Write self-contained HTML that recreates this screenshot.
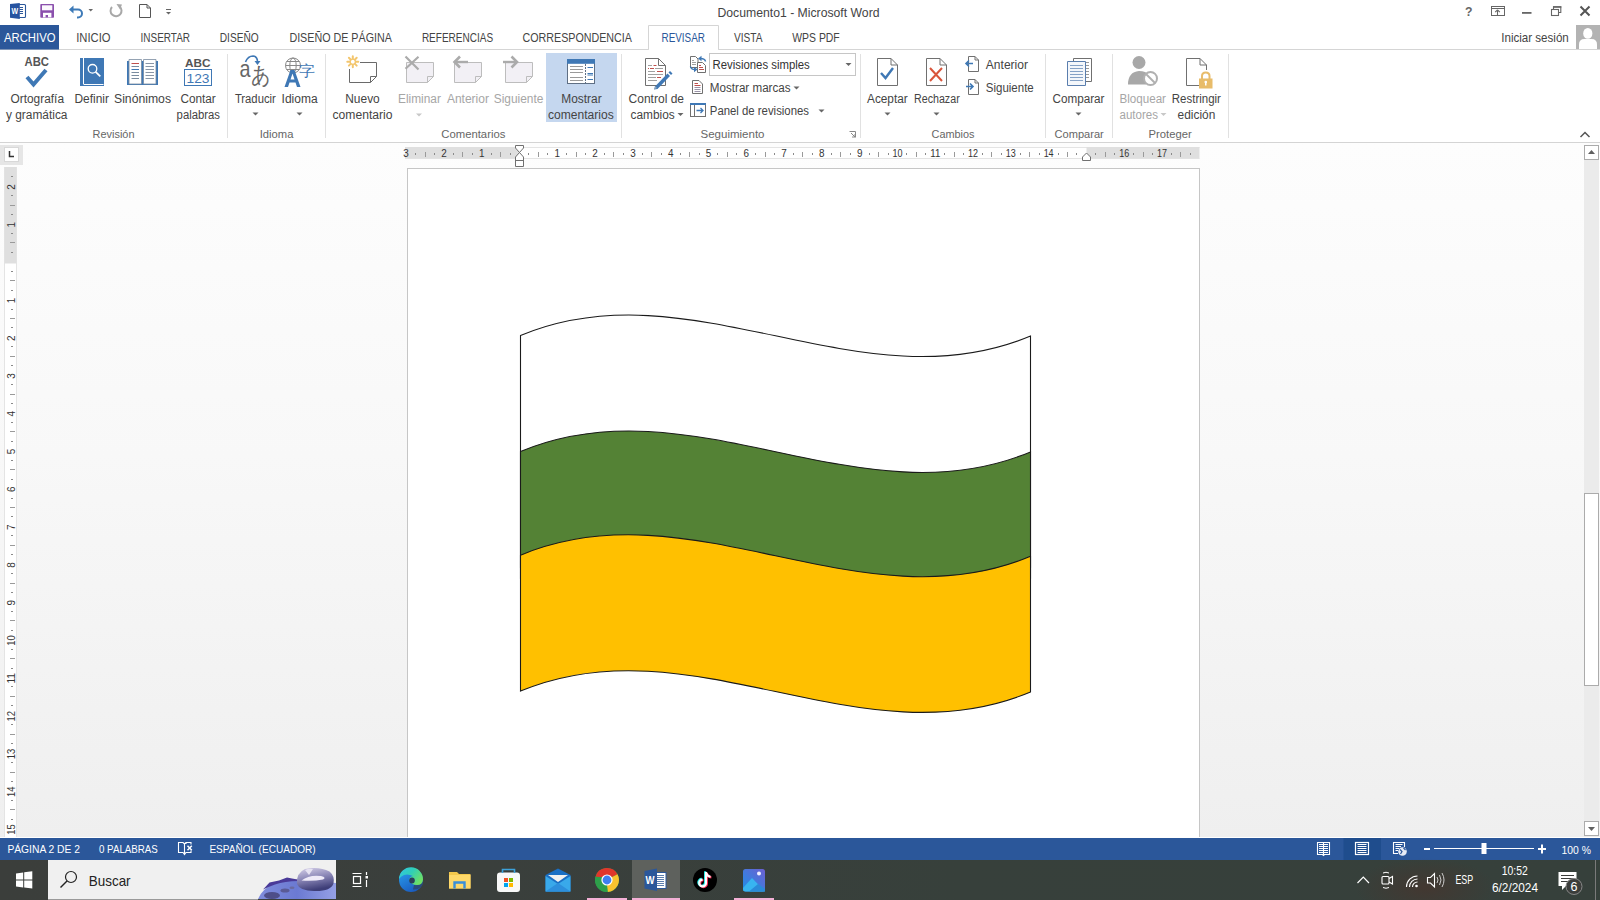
<!DOCTYPE html>
<html><head><meta charset="utf-8"><title>Documento1 - Microsoft Word</title>
<style>
html,body{margin:0;padding:0;width:1600px;height:900px;overflow:hidden;background:#fff;}
svg{display:block;font-family:"Liberation Sans", sans-serif;}
</style></head><body>
<svg width="1600" height="900" viewBox="0 0 1600 900">
<defs><linearGradient id="docbg" x1="0" y1="0" x2="0" y2="1"><stop offset="0" stop-color="#fdfdfd"/><stop offset="0.45" stop-color="#f8f8f8"/><stop offset="1" stop-color="#efefef"/></linearGradient><linearGradient id="tbbg" x1="0" y1="0" x2="1" y2="0"><stop offset="0" stop-color="#3b3e3b"/><stop offset="0.3" stop-color="#3a3f3c"/><stop offset="0.6" stop-color="#37403b"/><stop offset="1" stop-color="#36403b"/></linearGradient><radialGradient id="tbwarm" cx="0.5" cy="0.5" r="0.5"><stop offset="0" stop-color="#45362f" stop-opacity="0.85"/><stop offset="1" stop-color="#45362f" stop-opacity="0"/></radialGradient></defs>
<rect x="0" y="0" width="1600" height="143" fill="#ffffff" stroke="none" stroke-width="1" />
<rect x="0" y="143" width="1600" height="695" fill="url(#docbg)" stroke="none" stroke-width="1" />
<g><rect x="16.5" y="4.5" width="9" height="13" rx="1" fill="#fff" stroke="#2b579a" stroke-width="1.1"/><path d="M19.5 7.5 H23 M19.5 9.5 H23 M19.5 11.5 H23 M19.5 13.5 H23" stroke="#2b579a" stroke-width="1.1"/><path d="M10 4 L19.8 3 V19 L10 17.8 Z" fill="#2653a0"/><text x="11.6" y="14.2" font-size="8.5" font-weight="bold" fill="#fff" textLength="6.6" lengthAdjust="spacingAndGlyphs">W</text></g>
<g><rect x="40.3" y="4" width="13.7" height="13.8" rx="0.8" fill="#8b50ad"/><rect x="42" y="5.3" width="10.3" height="5" fill="#fbf8fd"/><rect x="43" y="12.8" width="8.4" height="4.6" fill="#fff"/><rect x="45.6" y="15" width="2.4" height="2.4" fill="#8b50ad"/></g>
<path d="M71.5 9.5 H78 a4 4 0 0 1 0 8 h-1" fill="none" stroke="#3d7ab8" stroke-width="2"/><path d="M69 9.5 L73.5 5.5 L73.5 13.5 Z" fill="#3d7ab8"/>
<path d="M88.5 9 L93 9 L90.75 11.5 Z" fill="#666"/>
<path d="M119.5 6.5 A5.5 5.5 0 1 1 112 7" fill="none" stroke="#a8a8a8" stroke-width="2"/><path d="M116.5 4 L122 4.5 L120 9.5 Z" fill="#a8a8a8"/>
<path d="M139.5 4.5 H147 L150.5 8 V17.5 H139.5 Z" fill="#fff" stroke="#555" stroke-width="1"/><path d="M147 4.5 V8 H150.5" fill="none" stroke="#555"/>
<line x1="166" y1="9.5" x2="171" y2="9.5" stroke="#666"/><path d="M166 12 H171 L168.5 14.5 Z" fill="#666"/>
<text x="717.50" y="17.00" font-size="13" fill="#444" font-weight="normal" textLength="162.00" lengthAdjust="spacingAndGlyphs" >Documento1 - Microsoft Word</text>
<text x="1465.00" y="16.00" font-size="13" fill="#666" font-weight="bold" textLength="7.50" lengthAdjust="spacingAndGlyphs" >?</text>
<rect x="1491.5" y="6.5" width="13" height="9" fill="none" stroke="#666"/><path d="M1497.5 9.8 L1495.2 12.2 M1497.5 9.8 L1499.8 12.2 M1497.5 10 V15" stroke="#666" fill="none" stroke-width="1.1"/><line x1="1491.5" y1="8.5" x2="1504.5" y2="8.5" stroke="#666"/>
<rect x="1522" y="12" width="9.5" height="1.8" fill="#666"/>
<rect x="1551.5" y="9.5" width="7" height="6" fill="none" stroke="#666" stroke-width="1.1"/><path d="M1553.5 9 V6.8 H1560.8 V12.5 H1558.5" fill="none" stroke="#666" stroke-width="1.1"/><rect x="1553" y="6.2" width="8.3" height="1.6" fill="#666"/>
<path d="M1580.5 6.5 L1589.5 15.5 M1589.5 6.5 L1580.5 15.5" stroke="#555" stroke-width="2"/>
<line x1="0" y1="49.5" x2="1600" y2="49.5" stroke="#d5d5d5" stroke-width="1" />
<rect x="0" y="25" width="59" height="24.5" fill="#2b579a" stroke="none" stroke-width="1" />
<text x="4.00" y="42.00" font-size="13" fill="#ffffff" font-weight="normal" textLength="51.50" lengthAdjust="spacingAndGlyphs" >ARCHIVO</text>
<path d="M648.5 49.5 V25.5 H718.5 V49.5" fill="#fff" stroke="#d5d5d5"/>
<rect x="649" y="49" width="69" height="1" fill="#ffffff" stroke="none" stroke-width="1" />
<text x="76.25" y="42.00" font-size="13" fill="#444" font-weight="normal" textLength="34.35" lengthAdjust="spacingAndGlyphs" >INICIO</text>
<text x="140.60" y="42.00" font-size="13" fill="#444" font-weight="normal" textLength="49.40" lengthAdjust="spacingAndGlyphs" >INSERTAR</text>
<text x="219.75" y="42.00" font-size="13" fill="#444" font-weight="normal" textLength="39.00" lengthAdjust="spacingAndGlyphs" >DISEÑO</text>
<text x="289.40" y="42.00" font-size="13" fill="#444" font-weight="normal" textLength="102.50" lengthAdjust="spacingAndGlyphs" >DISEÑO DE PÁGINA</text>
<text x="421.90" y="42.00" font-size="13" fill="#444" font-weight="normal" textLength="71.20" lengthAdjust="spacingAndGlyphs" >REFERENCIAS</text>
<text x="522.50" y="42.00" font-size="13" fill="#444" font-weight="normal" textLength="109.40" lengthAdjust="spacingAndGlyphs" >CORRESPONDENCIA</text>
<text x="734.00" y="42.00" font-size="13" fill="#444" font-weight="normal" textLength="28.50" lengthAdjust="spacingAndGlyphs" >VISTA</text>
<text x="792.25" y="42.00" font-size="13" fill="#444" font-weight="normal" textLength="47.50" lengthAdjust="spacingAndGlyphs" >WPS PDF</text>
<text x="661.50" y="42.00" font-size="13" fill="#2b579a" font-weight="normal" textLength="43.50" lengthAdjust="spacingAndGlyphs" >REVISAR</text>
<text x="1501.25" y="41.50" font-size="13" fill="#444" font-weight="normal" textLength="67.50" lengthAdjust="spacingAndGlyphs" >Iniciar sesión</text>
<rect x="1576" y="25" width="24" height="24" fill="#b3b3b3" stroke="none" stroke-width="1" />
<ellipse cx="1587.8" cy="33.4" rx="4.6" ry="5.4" fill="#fff"/><path d="M1579 49 V44.5 Q1579 39 1584.5 39 H1591.5 Q1597 39 1597 44.5 V49 Z" fill="#fff"/>
<line x1="0" y1="142.5" x2="1600" y2="142.5" stroke="#d4d4d4" stroke-width="1" />
<line x1="227.5" y1="54" x2="227.5" y2="138" stroke="#e1e1e1" stroke-width="1" />
<line x1="325.5" y1="54" x2="325.5" y2="138" stroke="#e1e1e1" stroke-width="1" />
<line x1="621.5" y1="54" x2="621.5" y2="138" stroke="#e1e1e1" stroke-width="1" />
<line x1="860.5" y1="54" x2="860.5" y2="138" stroke="#e1e1e1" stroke-width="1" />
<line x1="1045.5" y1="54" x2="1045.5" y2="138" stroke="#e1e1e1" stroke-width="1" />
<line x1="1112.5" y1="54" x2="1112.5" y2="138" stroke="#e1e1e1" stroke-width="1" />
<line x1="1228.5" y1="54" x2="1228.5" y2="138" stroke="#e1e1e1" stroke-width="1" />
<text x="10.50" y="103.00" font-size="12" fill="#444" font-weight="normal" textLength="53.50" lengthAdjust="spacingAndGlyphs" >Ortografía</text>
<text x="6.00" y="119.00" font-size="12" fill="#444" font-weight="normal" textLength="61.50" lengthAdjust="spacingAndGlyphs" >y gramática</text>
<text x="74.50" y="103.00" font-size="12" fill="#444" font-weight="normal" textLength="34.50" lengthAdjust="spacingAndGlyphs" >Definir</text>
<text x="114.00" y="103.00" font-size="12" fill="#444" font-weight="normal" textLength="57.00" lengthAdjust="spacingAndGlyphs" >Sinónimos</text>
<text x="180.40" y="103.00" font-size="12" fill="#444" font-weight="normal" textLength="35.40" lengthAdjust="spacingAndGlyphs" >Contar</text>
<text x="176.60" y="119.00" font-size="12" fill="#444" font-weight="normal" textLength="43.40" lengthAdjust="spacingAndGlyphs" >palabras</text>
<text x="234.90" y="103.00" font-size="12" fill="#444" font-weight="normal" textLength="40.90" lengthAdjust="spacingAndGlyphs" >Traducir</text>
<text x="281.60" y="103.00" font-size="12" fill="#444" font-weight="normal" textLength="36.00" lengthAdjust="spacingAndGlyphs" >Idioma</text>
<text x="345.25" y="103.00" font-size="12" fill="#444" font-weight="normal" textLength="34.50" lengthAdjust="spacingAndGlyphs" >Nuevo</text>
<text x="332.50" y="119.00" font-size="12" fill="#444" font-weight="normal" textLength="60.00" lengthAdjust="spacingAndGlyphs" >comentario</text>
<text x="398.00" y="103.00" font-size="12" fill="#a6a6a6" font-weight="normal" textLength="42.90" lengthAdjust="spacingAndGlyphs" >Eliminar</text>
<text x="446.90" y="103.00" font-size="12" fill="#a6a6a6" font-weight="normal" textLength="42.10" lengthAdjust="spacingAndGlyphs" >Anterior</text>
<text x="493.75" y="103.00" font-size="12" fill="#a6a6a6" font-weight="normal" textLength="49.65" lengthAdjust="spacingAndGlyphs" >Siguiente</text>
<rect x="546" y="53" width="71" height="69" fill="#c5d7ef" stroke="none" stroke-width="1" />
<text x="561.25" y="103.00" font-size="12" fill="#444" font-weight="normal" textLength="40.35" lengthAdjust="spacingAndGlyphs" >Mostrar</text>
<text x="548.00" y="119.00" font-size="12" fill="#444" font-weight="normal" textLength="65.75" lengthAdjust="spacingAndGlyphs" >comentarios</text>
<text x="628.60" y="103.00" font-size="12" fill="#444" font-weight="normal" textLength="55.40" lengthAdjust="spacingAndGlyphs" >Control de</text>
<text x="630.60" y="119.00" font-size="12" fill="#444" font-weight="normal" textLength="44.10" lengthAdjust="spacingAndGlyphs" >cambios</text>
<text x="867.00" y="103.00" font-size="12" fill="#444" font-weight="normal" textLength="40.70" lengthAdjust="spacingAndGlyphs" >Aceptar</text>
<text x="914.00" y="103.00" font-size="12" fill="#444" font-weight="normal" textLength="45.70" lengthAdjust="spacingAndGlyphs" >Rechazar</text>
<text x="985.80" y="68.75" font-size="12" fill="#444" font-weight="normal" textLength="42.20" lengthAdjust="spacingAndGlyphs" >Anterior</text>
<text x="985.80" y="91.90" font-size="12" fill="#444" font-weight="normal" textLength="47.95" lengthAdjust="spacingAndGlyphs" >Siguiente</text>
<text x="1052.50" y="103.00" font-size="12" fill="#444" font-weight="normal" textLength="52.00" lengthAdjust="spacingAndGlyphs" >Comparar</text>
<text x="1119.50" y="103.00" font-size="12" fill="#a6a6a6" font-weight="normal" textLength="46.50" lengthAdjust="spacingAndGlyphs" >Bloquear</text>
<text x="1119.50" y="119.00" font-size="12" fill="#a6a6a6" font-weight="normal" textLength="38.50" lengthAdjust="spacingAndGlyphs" >autores</text>
<text x="1171.80" y="103.00" font-size="12" fill="#444" font-weight="normal" textLength="49.10" lengthAdjust="spacingAndGlyphs" >Restringir</text>
<text x="1177.60" y="119.00" font-size="12" fill="#444" font-weight="normal" textLength="37.70" lengthAdjust="spacingAndGlyphs" >edición</text>
<rect x="709.5" y="53.5" width="146" height="22" fill="#fff" stroke="#c6c6c6"/>
<text x="712.50" y="69.00" font-size="12" fill="#333" font-weight="normal" textLength="97.30" lengthAdjust="spacingAndGlyphs" >Revisiones simples</text>
<text x="709.80" y="92.20" font-size="12" fill="#444" font-weight="normal" textLength="80.80" lengthAdjust="spacingAndGlyphs" >Mostrar marcas</text>
<text x="709.80" y="114.70" font-size="12" fill="#444" font-weight="normal" textLength="99.20" lengthAdjust="spacingAndGlyphs" >Panel de revisiones</text>
<text x="92.60" y="137.50" font-size="11" fill="#666" font-weight="normal" textLength="41.90" lengthAdjust="spacingAndGlyphs" >Revisión</text>
<text x="259.70" y="137.50" font-size="11" fill="#666" font-weight="normal" textLength="33.70" lengthAdjust="spacingAndGlyphs" >Idioma</text>
<text x="441.25" y="137.50" font-size="11" fill="#666" font-weight="normal" textLength="64.15" lengthAdjust="spacingAndGlyphs" >Comentarios</text>
<text x="700.50" y="137.50" font-size="11" fill="#666" font-weight="normal" textLength="64.00" lengthAdjust="spacingAndGlyphs" >Seguimiento</text>
<text x="931.60" y="137.50" font-size="11" fill="#666" font-weight="normal" textLength="42.90" lengthAdjust="spacingAndGlyphs" >Cambios</text>
<text x="1054.50" y="137.50" font-size="11" fill="#666" font-weight="normal" textLength="49.25" lengthAdjust="spacingAndGlyphs" >Comparar</text>
<text x="1148.60" y="137.50" font-size="11" fill="#666" font-weight="normal" textLength="43.20" lengthAdjust="spacingAndGlyphs" >Proteger</text>
<path d="M252.5 112.5 H258.5 L255.5 115.5 Z" fill="#666"/>
<path d="M296.5 112.5 H302.5 L299.5 115.5 Z" fill="#666"/>
<path d="M416 113.5 H422 L419 116.5 Z" fill="#c8c8c8"/>
<path d="M677.5 113.0 H683.5 L680.5 116.0 Z" fill="#666"/>
<path d="M884.5 112.5 H890.5 L887.5 115.5 Z" fill="#666"/>
<path d="M933.5 112.5 H939.5 L936.5 115.5 Z" fill="#666"/>
<path d="M1075.5 112.5 H1081.5 L1078.5 115.5 Z" fill="#666"/>
<path d="M1160.5 113.0 H1166.5 L1163.5 116.0 Z" fill="#c8c8c8"/>
<path d="M845.5 63.0 H851.5 L848.5 66.0 Z" fill="#666"/>
<path d="M793.5 86.5 H799.5 L796.5 89.5 Z" fill="#666"/>
<path d="M818.5 109.5 H824.5 L821.5 112.5 Z" fill="#666"/>
<path d="M849.5 131.5 H855.5 V137.5" fill="none" stroke="#888"/><path d="M851 133 L855 137 M852 137 H855 V134" fill="none" stroke="#888"/>
<path d="M1580.5 137 L1585 132.5 L1589.5 137" fill="none" stroke="#555" stroke-width="1.5"/>
<text x="24.5" y="66" font-size="12" font-weight="bold" fill="#555" textLength="24.5" lengthAdjust="spacingAndGlyphs">ABC</text>
<path d="M27 77 L33.5 84.5 L46 70" fill="none" stroke="#3f78b5" stroke-width="4"/>
<rect x="80" y="58" width="24" height="26" fill="#3f78b5"/><rect x="83" y="58" width="1" height="26" fill="#fff"/><rect x="80" y="84" width="24" height="2" fill="#3f78b5"/><rect x="83.5" y="84" width="20" height="1" fill="#fff"/><circle cx="92.5" cy="68.8" r="4.3" fill="none" stroke="#fff" stroke-width="1.3"/><path d="M95.6 71.9 L100.3 76.3" stroke="#fff" stroke-width="1.8"/>
<path d="M127 61 H158 V85 H127 Z" fill="#3f78b5"/><path d="M129 59.5 H141.5 V84 H129 Z" fill="#fff" stroke="#7a8ca0" stroke-width="0.8"/><path d="M143.5 59.5 H156 V84 H143.5 Z" fill="#fff" stroke="#7a8ca0" stroke-width="0.8"/>
<line x1="131.5" y1="63.5" x2="139" y2="63.5" stroke="#c0504d" stroke-width="1"/><line x1="145.5" y1="63.5" x2="154" y2="63.5" stroke="#8a96a6" stroke-width="1"/>
<line x1="131.5" y1="66.5" x2="139" y2="66.5" stroke="#7a8ca0" stroke-width="1"/><line x1="145.5" y1="66.5" x2="154" y2="66.5" stroke="#8a96a6" stroke-width="1"/>
<line x1="131.5" y1="69.5" x2="139" y2="69.5" stroke="#3f78b5" stroke-width="1"/><line x1="145.5" y1="69.5" x2="154" y2="69.5" stroke="#8a96a6" stroke-width="1"/>
<line x1="131.5" y1="72.5" x2="139" y2="72.5" stroke="#7a8ca0" stroke-width="1"/><line x1="145.5" y1="72.5" x2="154" y2="72.5" stroke="#8a96a6" stroke-width="1"/>
<line x1="131.5" y1="75.5" x2="139" y2="75.5" stroke="#7a8ca0" stroke-width="1"/><line x1="145.5" y1="75.5" x2="154" y2="75.5" stroke="#8a96a6" stroke-width="1"/>
<line x1="131.5" y1="78.5" x2="139" y2="78.5" stroke="#7a8ca0" stroke-width="1"/><line x1="145.5" y1="78.5" x2="154" y2="78.5" stroke="#8a96a6" stroke-width="1"/>
<text x="185" y="66.5" font-size="11" font-weight="bold" fill="#555" textLength="25.5" lengthAdjust="spacingAndGlyphs">ABC</text><rect x="184.5" y="69.5" width="27" height="16" fill="#fff" stroke="#3f78b5"/><text x="186.5" y="83" font-size="13" fill="#3f78b5" textLength="23" lengthAdjust="spacingAndGlyphs">123</text>
<text x="239.5" y="76.5" font-size="24" fill="#666" textLength="11" lengthAdjust="spacingAndGlyphs">a</text><text x="250.5" y="83" font-size="23" fill="#666" textLength="20" lengthAdjust="spacingAndGlyphs">あ</text><path d="M245.5 62 Q248 56 253 56 Q257.5 56.5 257.5 62" fill="none" stroke="#3f78b5" stroke-width="1.6"/><path d="M254.5 61 L257.5 65 L260.5 61 Z" fill="#3f78b5"/>
<circle cx="293" cy="65.5" r="7.5" fill="none" stroke="#888" stroke-width="1"/><ellipse cx="293" cy="65.5" rx="3.2" ry="7.5" fill="none" stroke="#888" stroke-width="1"/><line x1="285.5" y1="65.5" x2="300.5" y2="65.5" stroke="#888"/><line x1="286.5" y1="61.5" x2="299.5" y2="61.5" stroke="#888"/><line x1="286.5" y1="69.5" x2="299.5" y2="69.5" stroke="#888"/><path d="M284.5 87 L290.5 70 H294.5 L300.5 87 H297 L295.5 82.5 H289.5 L288 87 Z M290.5 79.5 H294.5 L292.5 73.5 Z" fill="#3f78b5" fill-rule="evenodd"/><text x="299" y="76" font-size="15" fill="#3f78b5" textLength="16" lengthAdjust="spacingAndGlyphs">字</text>
<path d="M360 62.5 H376.5 V76.5 L370.5 82.5 H349.5 V69" fill="#fff" stroke="#6a6a6a"/><path d="M376.5 76.5 H370.5 V82.5" fill="none" stroke="#6a6a6a"/>
<g stroke="#f3c66e" stroke-width="2" stroke-linecap="round"><path d="M352.8 56.2 V58.6 M352.8 64.8 V67.2 M347.3 61.7 H349.7 M355.9 61.7 H358.3 M348.9 57.8 L350.6 59.5 M355 63.9 L356.7 65.6 M356.7 57.8 L355 59.5 M350.6 63.9 L348.9 65.6"/></g><circle cx="352.8" cy="61.7" r="2.6" fill="none" stroke="#f3c66e" stroke-width="1.3"/>
<path d="M406.5 62.5 H433.5 V76.5 L427.5 82.5 H406.5 Z" fill="#f2f0f5" stroke="#bdbdbd"/><path d="M433.5 76.5 H427.5 V82.5" fill="none" stroke="#bdbdbd"/>
<path d="M405.5 56.5 L418.5 69.5 M418.5 56.8 L405.5 68.8" stroke="#ababab" stroke-width="2.2"/>
<path d="M454.5 62.5 H481.5 V76.5 L475.5 82.5 H454.5 Z" fill="#f2f0f5" stroke="#bdbdbd"/><path d="M481.5 76.5 H475.5 V82.5" fill="none" stroke="#bdbdbd"/>
<path d="M454 62 H468" stroke="#ababab" stroke-width="2.4"/><path d="M460 56.5 L454.5 62 L460 67.5" fill="none" stroke="#ababab" stroke-width="2.6"/>
<path d="M505.5 62.5 H532.5 V76.5 L526.5 82.5 H505.5 Z" fill="#f2f0f5" stroke="#bdbdbd"/><path d="M532.5 76.5 H526.5 V82.5" fill="none" stroke="#bdbdbd"/>
<path d="M503 62 H517" stroke="#ababab" stroke-width="2.4"/><path d="M511.5 56.5 L517 62 L511.5 67.5" fill="none" stroke="#ababab" stroke-width="2.6"/>
<rect x="567.5" y="59.5" width="27" height="24" fill="#fff" stroke="#5f6f84"/><rect x="567" y="59" width="28" height="4.8" fill="#3f78b5"/><line x1="585.5" y1="64" x2="585.5" y2="83" stroke="#5f6f84" stroke-dasharray="2 1"/>
<line x1="570" y1="66.5" x2="583" y2="66.5" stroke="#9a9a9a"/>
<line x1="570" y1="69.5" x2="583" y2="69.5" stroke="#9a9a9a"/>
<line x1="570" y1="72.5" x2="583" y2="72.5" stroke="#9a9a9a"/>
<line x1="570" y1="77.5" x2="583" y2="77.5" stroke="#9a9a9a"/>
<line x1="570" y1="80.5" x2="583" y2="80.5" stroke="#9a9a9a"/>
<line x1="587.5" y1="67.5" x2="593" y2="67.5" stroke="#3f78b5"/>
<line x1="587.5" y1="73.5" x2="593" y2="73.5" stroke="#3f78b5"/>
<line x1="587.5" y1="75" x2="593" y2="75" stroke="#3f78b5"/>
<line x1="587.5" y1="79.5" x2="593" y2="79.5" stroke="#3f78b5"/>
<path d="M645.5 58.5 H658.5 L665.5 65.5 V85.5 H645.5 Z" fill="#fff" stroke="#707070"/><path d="M658.5 58.5 V65.5 H665.5" fill="none" stroke="#707070"/>
<line x1="648" y1="65.5" x2="652" y2="65.5" stroke="#a0a0a0"/>
<line x1="653.5" y1="65.5" x2="656.5" y2="65.5" stroke="#c0504d"/>
<line x1="648" y1="68.5" x2="649" y2="68.5" stroke="#c0504d"/>
<line x1="650" y1="68.5" x2="654" y2="68.5" stroke="#c0504d"/>
<line x1="655" y1="68.5" x2="663" y2="68.5" stroke="#a0a0a0"/>
<line x1="648" y1="71.5" x2="655" y2="71.5" stroke="#a0a0a0"/>
<line x1="657" y1="71.5" x2="663" y2="71.5" stroke="#c0504d"/>
<line x1="648" y1="74.5" x2="663" y2="74.5" stroke="#a0a0a0"/>
<line x1="648" y1="77.5" x2="656" y2="77.5" stroke="#a0a0a0"/>
<line x1="657" y1="77.5" x2="661" y2="77.5" stroke="#c0504d"/>
<line x1="648" y1="80.5" x2="657" y2="80.5" stroke="#a0a0a0"/>
<path d="M655 86.5 L667.5 73.5 L670 76 L657.5 89 L654 89.5 Z" fill="#3f78b5"/><path d="M668.5 72.5 L670 71 L672.5 73.5 L671 75 Z" fill="#3f78b5"/><path d="M657 88 L655.5 86.5 L654 89.5 Z" fill="#9ab"/>
<path d="M690.5 56.5 H695.5 L698 59 V67.5 H690.5 Z" fill="#fff" stroke="#707070"/><path d="M692 60.5 H694 M692 62.5 H696 M692 64.5 H696" stroke="#a0a0a0"/><path d="M697.5 62.5 H702.5 L705.5 65.5 V72.5 H697.5 Z" fill="#fff" stroke="#707070"/><path d="M699 65.5 H701 M699 67.5 H703 M699 69.5 H704" stroke="#c0504d"/><path d="M705.5 61.5 Q705 58.5 700.5 58.5" fill="none" stroke="#3f78b5" stroke-width="1.5"/><path d="M698 58.5 L701.5 55.8 V61.2 Z" fill="#3f78b5"/><path d="M690.5 66.5 Q691 69.5 695 69.5" fill="none" stroke="#3f78b5" stroke-width="1.5"/><path d="M697.5 69.5 L694 66.8 V72.2 Z" fill="#3f78b5"/>
<path d="M692.5 80.5 H699 L702.5 84 V93.5 H692.5 Z" fill="#fff" stroke="#707070"/><path d="M694.5 83.5 H698 M694.5 85.5 H700.5" stroke="#c0504d"/><path d="M694.5 87.5 H700.5 M694.5 89.5 H700.5 M694.5 91.5 H700.5" stroke="#9a93a8"/>
<rect x="690.5" y="103.5" width="15" height="13" fill="#fff" stroke="#707070"/><rect x="690" y="103" width="16" height="2" fill="#3f78b5"/><path d="M694.5 105 V116.5" stroke="#707070"/><path d="M696.5 110.5 H703 M700.5 108 L703 110.5 L700.5 113" fill="none" stroke="#3f78b5" stroke-width="1.3"/>
<path d="M877.5 58.5 H891 L897.5 65 V85.5 H877.5 Z" fill="#fff" stroke="#707070"/><path d="M891 58.5 V65 H897.5" fill="none" stroke="#707070"/>
<path d="M881 73 L885.5 78 L893 68" fill="none" stroke="#3f78b5" stroke-width="2.4"/>
<path d="M926.5 58.5 H940 L946.5 65 V85.5 H926.5 Z" fill="#fff" stroke="#707070"/><path d="M940 58.5 V65 H946.5" fill="none" stroke="#707070"/>
<path d="M930 68 L942 81 M942 68 L930 81" stroke="#d9553b" stroke-width="2"/>
<path d="M968.5 56.5 H975 L978.5 60 V71.5 H968.5 Z" fill="#fff" stroke="#707070"/><path d="M975 56.5 V60 H978.5" fill="none" stroke="#707070"/>
<path d="M966 63.5 H973 M969 60.5 L966 63.5 L969 66.5" fill="none" stroke="#3f78b5" stroke-width="1.6"/>
<path d="M968.5 79.5 H975 L978.5 83 V94.5 H968.5 Z" fill="#fff" stroke="#707070"/><path d="M975 79.5 V83 H978.5" fill="none" stroke="#707070"/>
<path d="M966 86.5 H973 M970 83.5 L973 86.5 L970 89.5" fill="none" stroke="#3f78b5" stroke-width="1.6"/>
<path d="M1073.5 58.5 H1091.5 V81.5 H1073.5 Z" fill="#fff" stroke="#707070"/><path d="M1067.5 61.5 H1085.5 V85.5 H1067.5 Z" fill="#f4f7fb" stroke="#5a7eae"/>
<line x1="1070" y1="65.5" x2="1083" y2="65.5" stroke="#86a2c6"/>
<line x1="1070" y1="68.5" x2="1083" y2="68.5" stroke="#86a2c6"/>
<line x1="1070" y1="71.5" x2="1083" y2="71.5" stroke="#86a2c6"/>
<line x1="1070" y1="74.5" x2="1083" y2="74.5" stroke="#86a2c6"/>
<line x1="1070" y1="77.5" x2="1083" y2="77.5" stroke="#86a2c6"/>
<line x1="1070" y1="80.5" x2="1083" y2="80.5" stroke="#86a2c6"/>
<line x1="1086" y1="62.5" x2="1089" y2="62.5" stroke="#999"/>
<line x1="1086" y1="65.5" x2="1089" y2="65.5" stroke="#999"/>
<line x1="1086" y1="68.5" x2="1089" y2="68.5" stroke="#999"/>
<line x1="1086" y1="71.5" x2="1089" y2="71.5" stroke="#999"/>
<line x1="1086" y1="74.5" x2="1089" y2="74.5" stroke="#999"/>
<line x1="1086" y1="77.5" x2="1089" y2="77.5" stroke="#999"/>
<circle cx="1139" cy="62.5" r="6.5" fill="#a8a8a8"/><path d="M1128 84.5 Q1128 72 1139 71 Q1146 71 1149 75 L1146 84.5 Z" fill="#a8a8a8"/><circle cx="1150.5" cy="78.5" r="6.5" fill="#fff" stroke="#b0b0b0" stroke-width="2"/><path d="M1146 74 L1155 83" stroke="#b0b0b0" stroke-width="2"/>
<path d="M1186.5 58.5 H1200 L1206.5 65 V70 M1199 85.5 H1186.5 V58.5" fill="none" stroke="#707070"/><path d="M1200 58.5 V65 H1206.5" fill="none" stroke="#707070"/><path d="M1202 79 V76 Q1202 72.5 1205.75 72.5 Q1209.5 72.5 1209.5 76 V79" fill="none" stroke="#e8bc6a" stroke-width="2"/><rect x="1199" y="78.5" width="13.5" height="10" fill="#e8bc6a"/><circle cx="1205.75" cy="82" r="1.3" fill="#fff"/><rect x="1205" y="82" width="1.5" height="3.5" fill="#fff"/>
<rect x="0" y="145" width="23" height="20" fill="#e6e6e6" stroke="none" stroke-width="1" />
<rect x="4.5" y="147.5" width="14" height="14" fill="#fff" stroke="#d8d8d8" stroke-width="1" />
<path d="M9.5 151 V156.5 H14" fill="none" stroke="#333" stroke-width="1.5"/>
<rect x="405" y="147" width="794.5" height="11.5" fill="#ffffff" stroke="none" stroke-width="1" />
<line x1="405" y1="147.5" x2="1199.5" y2="147.5" stroke="#e4e4e4" stroke-width="1" />
<line x1="405" y1="158.5" x2="1199.5" y2="158.5" stroke="#e4e4e4" stroke-width="1" />
<rect x="405" y="147" width="114.5" height="11.5" fill="#dfdfdf" stroke="none" stroke-width="1" />
<rect x="1086.5" y="147" width="113" height="11.5" fill="#dfdfdf" stroke="none" stroke-width="1" />
<text x="403.37" y="157.00" font-size="10" fill="#333" font-weight="normal" textLength="5.50" lengthAdjust="spacingAndGlyphs" >3</text>
<rect x="415" y="153" width="1" height="2" fill="#8a8a8a" stroke="none" stroke-width="1" />
<rect x="425" y="152" width="1" height="5" fill="#9a9a9a" stroke="none" stroke-width="1" />
<rect x="434" y="153" width="1" height="2" fill="#8a8a8a" stroke="none" stroke-width="1" />
<text x="441.16" y="157.00" font-size="10" fill="#333" font-weight="normal" textLength="5.50" lengthAdjust="spacingAndGlyphs" >2</text>
<rect x="453" y="153" width="1" height="2" fill="#8a8a8a" stroke="none" stroke-width="1" />
<rect x="462" y="152" width="1" height="5" fill="#9a9a9a" stroke="none" stroke-width="1" />
<rect x="472" y="153" width="1" height="2" fill="#8a8a8a" stroke="none" stroke-width="1" />
<text x="478.95" y="157.00" font-size="10" fill="#333" font-weight="normal" textLength="5.50" lengthAdjust="spacingAndGlyphs" >1</text>
<rect x="491" y="153" width="1" height="2" fill="#8a8a8a" stroke="none" stroke-width="1" />
<rect x="500" y="152" width="1" height="5" fill="#9a9a9a" stroke="none" stroke-width="1" />
<rect x="510" y="153" width="1" height="2" fill="#8a8a8a" stroke="none" stroke-width="1" />
<rect x="528" y="153" width="1" height="2" fill="#8a8a8a" stroke="none" stroke-width="1" />
<rect x="538" y="152" width="1" height="5" fill="#9a9a9a" stroke="none" stroke-width="1" />
<rect x="547" y="153" width="1" height="2" fill="#8a8a8a" stroke="none" stroke-width="1" />
<text x="554.54" y="157.00" font-size="10" fill="#333" font-weight="normal" textLength="5.50" lengthAdjust="spacingAndGlyphs" >1</text>
<rect x="566" y="153" width="1" height="2" fill="#8a8a8a" stroke="none" stroke-width="1" />
<rect x="576" y="152" width="1" height="5" fill="#9a9a9a" stroke="none" stroke-width="1" />
<rect x="585" y="153" width="1" height="2" fill="#8a8a8a" stroke="none" stroke-width="1" />
<text x="592.34" y="157.00" font-size="10" fill="#333" font-weight="normal" textLength="5.50" lengthAdjust="spacingAndGlyphs" >2</text>
<rect x="604" y="153" width="1" height="2" fill="#8a8a8a" stroke="none" stroke-width="1" />
<rect x="613" y="152" width="1" height="5" fill="#9a9a9a" stroke="none" stroke-width="1" />
<rect x="623" y="153" width="1" height="2" fill="#8a8a8a" stroke="none" stroke-width="1" />
<text x="630.13" y="157.00" font-size="10" fill="#333" font-weight="normal" textLength="5.50" lengthAdjust="spacingAndGlyphs" >3</text>
<rect x="642" y="153" width="1" height="2" fill="#8a8a8a" stroke="none" stroke-width="1" />
<rect x="651" y="152" width="1" height="5" fill="#9a9a9a" stroke="none" stroke-width="1" />
<rect x="661" y="153" width="1" height="2" fill="#8a8a8a" stroke="none" stroke-width="1" />
<text x="667.93" y="157.00" font-size="10" fill="#333" font-weight="normal" textLength="5.50" lengthAdjust="spacingAndGlyphs" >4</text>
<rect x="680" y="153" width="1" height="2" fill="#8a8a8a" stroke="none" stroke-width="1" />
<rect x="689" y="152" width="1" height="5" fill="#9a9a9a" stroke="none" stroke-width="1" />
<rect x="699" y="153" width="1" height="2" fill="#8a8a8a" stroke="none" stroke-width="1" />
<text x="705.73" y="157.00" font-size="10" fill="#333" font-weight="normal" textLength="5.50" lengthAdjust="spacingAndGlyphs" >5</text>
<rect x="717" y="153" width="1" height="2" fill="#8a8a8a" stroke="none" stroke-width="1" />
<rect x="727" y="152" width="1" height="5" fill="#9a9a9a" stroke="none" stroke-width="1" />
<rect x="736" y="153" width="1" height="2" fill="#8a8a8a" stroke="none" stroke-width="1" />
<text x="743.52" y="157.00" font-size="10" fill="#333" font-weight="normal" textLength="5.50" lengthAdjust="spacingAndGlyphs" >6</text>
<rect x="755" y="153" width="1" height="2" fill="#8a8a8a" stroke="none" stroke-width="1" />
<rect x="765" y="152" width="1" height="5" fill="#9a9a9a" stroke="none" stroke-width="1" />
<rect x="774" y="153" width="1" height="2" fill="#8a8a8a" stroke="none" stroke-width="1" />
<text x="781.32" y="157.00" font-size="10" fill="#333" font-weight="normal" textLength="5.50" lengthAdjust="spacingAndGlyphs" >7</text>
<rect x="793" y="153" width="1" height="2" fill="#8a8a8a" stroke="none" stroke-width="1" />
<rect x="802" y="152" width="1" height="5" fill="#9a9a9a" stroke="none" stroke-width="1" />
<rect x="812" y="153" width="1" height="2" fill="#8a8a8a" stroke="none" stroke-width="1" />
<text x="819.11" y="157.00" font-size="10" fill="#333" font-weight="normal" textLength="5.50" lengthAdjust="spacingAndGlyphs" >8</text>
<rect x="831" y="153" width="1" height="2" fill="#8a8a8a" stroke="none" stroke-width="1" />
<rect x="840" y="152" width="1" height="5" fill="#9a9a9a" stroke="none" stroke-width="1" />
<rect x="850" y="153" width="1" height="2" fill="#8a8a8a" stroke="none" stroke-width="1" />
<text x="856.90" y="157.00" font-size="10" fill="#333" font-weight="normal" textLength="5.50" lengthAdjust="spacingAndGlyphs" >9</text>
<rect x="869" y="153" width="1" height="2" fill="#8a8a8a" stroke="none" stroke-width="1" />
<rect x="878" y="152" width="1" height="5" fill="#9a9a9a" stroke="none" stroke-width="1" />
<rect x="888" y="153" width="1" height="2" fill="#8a8a8a" stroke="none" stroke-width="1" />
<text x="892.45" y="157.00" font-size="10" fill="#333" font-weight="normal" textLength="10.00" lengthAdjust="spacingAndGlyphs" >10</text>
<rect x="906" y="153" width="1" height="2" fill="#8a8a8a" stroke="none" stroke-width="1" />
<rect x="916" y="152" width="1" height="5" fill="#9a9a9a" stroke="none" stroke-width="1" />
<rect x="925" y="153" width="1" height="2" fill="#8a8a8a" stroke="none" stroke-width="1" />
<text x="930.25" y="157.00" font-size="10" fill="#333" font-weight="normal" textLength="10.00" lengthAdjust="spacingAndGlyphs" >11</text>
<rect x="944" y="153" width="1" height="2" fill="#8a8a8a" stroke="none" stroke-width="1" />
<rect x="954" y="152" width="1" height="5" fill="#9a9a9a" stroke="none" stroke-width="1" />
<rect x="963" y="153" width="1" height="2" fill="#8a8a8a" stroke="none" stroke-width="1" />
<text x="968.04" y="157.00" font-size="10" fill="#333" font-weight="normal" textLength="10.00" lengthAdjust="spacingAndGlyphs" >12</text>
<rect x="982" y="153" width="1" height="2" fill="#8a8a8a" stroke="none" stroke-width="1" />
<rect x="991" y="152" width="1" height="5" fill="#9a9a9a" stroke="none" stroke-width="1" />
<rect x="1001" y="153" width="1" height="2" fill="#8a8a8a" stroke="none" stroke-width="1" />
<text x="1005.84" y="157.00" font-size="10" fill="#333" font-weight="normal" textLength="10.00" lengthAdjust="spacingAndGlyphs" >13</text>
<rect x="1020" y="153" width="1" height="2" fill="#8a8a8a" stroke="none" stroke-width="1" />
<rect x="1029" y="152" width="1" height="5" fill="#9a9a9a" stroke="none" stroke-width="1" />
<rect x="1039" y="153" width="1" height="2" fill="#8a8a8a" stroke="none" stroke-width="1" />
<text x="1043.63" y="157.00" font-size="10" fill="#333" font-weight="normal" textLength="10.00" lengthAdjust="spacingAndGlyphs" >14</text>
<rect x="1058" y="153" width="1" height="2" fill="#8a8a8a" stroke="none" stroke-width="1" />
<rect x="1067" y="152" width="1" height="5" fill="#9a9a9a" stroke="none" stroke-width="1" />
<rect x="1076" y="153" width="1" height="2" fill="#8a8a8a" stroke="none" stroke-width="1" />
<rect x="1095" y="153" width="1" height="2" fill="#8a8a8a" stroke="none" stroke-width="1" />
<rect x="1105" y="152" width="1" height="5" fill="#9a9a9a" stroke="none" stroke-width="1" />
<rect x="1114" y="153" width="1" height="2" fill="#8a8a8a" stroke="none" stroke-width="1" />
<text x="1119.22" y="157.00" font-size="10" fill="#333" font-weight="normal" textLength="10.00" lengthAdjust="spacingAndGlyphs" >16</text>
<rect x="1133" y="153" width="1" height="2" fill="#8a8a8a" stroke="none" stroke-width="1" />
<rect x="1143" y="152" width="1" height="5" fill="#9a9a9a" stroke="none" stroke-width="1" />
<rect x="1152" y="153" width="1" height="2" fill="#8a8a8a" stroke="none" stroke-width="1" />
<text x="1157.01" y="157.00" font-size="10" fill="#333" font-weight="normal" textLength="10.00" lengthAdjust="spacingAndGlyphs" >17</text>
<rect x="1171" y="153" width="1" height="2" fill="#8a8a8a" stroke="none" stroke-width="1" />
<rect x="1180" y="152" width="1" height="5" fill="#9a9a9a" stroke="none" stroke-width="1" />
<rect x="1190" y="153" width="1" height="2" fill="#8a8a8a" stroke="none" stroke-width="1" />
<path d="M515.5 145.5 H523.5 V148 L519.5 152.5 L523.5 157 V166.5 H515.5 V157 L519.5 152.5 L515.5 148 Z" fill="#fff" stroke="#707070"/><line x1="515.5" y1="160.5" x2="523.5" y2="160.5" stroke="#707070"/>
<path d="M1082.5 160.5 V157 L1086.5 153 L1090.5 157 V160.5 Z" fill="#fff" stroke="#707070"/>
<rect x="4.5" y="167" width="12" height="670" fill="#ffffff" stroke="none" stroke-width="1" />
<line x1="4.5" y1="167" x2="4.5" y2="837" stroke="#e4e4e4" stroke-width="1" />
<line x1="16.5" y1="167" x2="16.5" y2="837" stroke="#e4e4e4" stroke-width="1" />
<rect x="4.5" y="167" width="12" height="96.5" fill="#dfdfdf" stroke="none" stroke-width="1" />
<rect x="11" y="176" width="2" height="1" fill="#8a8a8a" stroke="none" stroke-width="1" />
<g transform="translate(15 187.01) rotate(-90)"><text x="-2.75" y="0" font-size="10" fill="#333" textLength="5.5" lengthAdjust="spacingAndGlyphs">2</text></g>
<rect x="11" y="195" width="2" height="1" fill="#8a8a8a" stroke="none" stroke-width="1" />
<rect x="10" y="205" width="5" height="1" fill="#9a9a9a" stroke="none" stroke-width="1" />
<rect x="11" y="214" width="2" height="1" fill="#8a8a8a" stroke="none" stroke-width="1" />
<g transform="translate(15 224.81) rotate(-90)"><text x="-2.75" y="0" font-size="10" fill="#333" textLength="5.5" lengthAdjust="spacingAndGlyphs">1</text></g>
<rect x="11" y="233" width="2" height="1" fill="#8a8a8a" stroke="none" stroke-width="1" />
<rect x="10" y="242" width="5" height="1" fill="#9a9a9a" stroke="none" stroke-width="1" />
<rect x="11" y="252" width="2" height="1" fill="#8a8a8a" stroke="none" stroke-width="1" />
<rect x="11" y="271" width="2" height="1" fill="#8a8a8a" stroke="none" stroke-width="1" />
<rect x="10" y="280" width="5" height="1" fill="#9a9a9a" stroke="none" stroke-width="1" />
<rect x="11" y="290" width="2" height="1" fill="#8a8a8a" stroke="none" stroke-width="1" />
<g transform="translate(15 300.40) rotate(-90)"><text x="-2.75" y="0" font-size="10" fill="#333" textLength="5.5" lengthAdjust="spacingAndGlyphs">1</text></g>
<rect x="11" y="309" width="2" height="1" fill="#8a8a8a" stroke="none" stroke-width="1" />
<rect x="10" y="318" width="5" height="1" fill="#9a9a9a" stroke="none" stroke-width="1" />
<rect x="11" y="327" width="2" height="1" fill="#8a8a8a" stroke="none" stroke-width="1" />
<g transform="translate(15 338.19) rotate(-90)"><text x="-2.75" y="0" font-size="10" fill="#333" textLength="5.5" lengthAdjust="spacingAndGlyphs">2</text></g>
<rect x="11" y="346" width="2" height="1" fill="#8a8a8a" stroke="none" stroke-width="1" />
<rect x="10" y="356" width="5" height="1" fill="#9a9a9a" stroke="none" stroke-width="1" />
<rect x="11" y="365" width="2" height="1" fill="#8a8a8a" stroke="none" stroke-width="1" />
<g transform="translate(15 375.99) rotate(-90)"><text x="-2.75" y="0" font-size="10" fill="#333" textLength="5.5" lengthAdjust="spacingAndGlyphs">3</text></g>
<rect x="11" y="384" width="2" height="1" fill="#8a8a8a" stroke="none" stroke-width="1" />
<rect x="10" y="394" width="5" height="1" fill="#9a9a9a" stroke="none" stroke-width="1" />
<rect x="11" y="403" width="2" height="1" fill="#8a8a8a" stroke="none" stroke-width="1" />
<g transform="translate(15 413.78) rotate(-90)"><text x="-2.75" y="0" font-size="10" fill="#333" textLength="5.5" lengthAdjust="spacingAndGlyphs">4</text></g>
<rect x="11" y="422" width="2" height="1" fill="#8a8a8a" stroke="none" stroke-width="1" />
<rect x="10" y="431" width="5" height="1" fill="#9a9a9a" stroke="none" stroke-width="1" />
<rect x="11" y="441" width="2" height="1" fill="#8a8a8a" stroke="none" stroke-width="1" />
<g transform="translate(15 451.58) rotate(-90)"><text x="-2.75" y="0" font-size="10" fill="#333" textLength="5.5" lengthAdjust="spacingAndGlyphs">5</text></g>
<rect x="11" y="460" width="2" height="1" fill="#8a8a8a" stroke="none" stroke-width="1" />
<rect x="10" y="469" width="5" height="1" fill="#9a9a9a" stroke="none" stroke-width="1" />
<rect x="11" y="479" width="2" height="1" fill="#8a8a8a" stroke="none" stroke-width="1" />
<g transform="translate(15 489.37) rotate(-90)"><text x="-2.75" y="0" font-size="10" fill="#333" textLength="5.5" lengthAdjust="spacingAndGlyphs">6</text></g>
<rect x="11" y="498" width="2" height="1" fill="#8a8a8a" stroke="none" stroke-width="1" />
<rect x="10" y="507" width="5" height="1" fill="#9a9a9a" stroke="none" stroke-width="1" />
<rect x="11" y="516" width="2" height="1" fill="#8a8a8a" stroke="none" stroke-width="1" />
<g transform="translate(15 527.16) rotate(-90)"><text x="-2.75" y="0" font-size="10" fill="#333" textLength="5.5" lengthAdjust="spacingAndGlyphs">7</text></g>
<rect x="11" y="535" width="2" height="1" fill="#8a8a8a" stroke="none" stroke-width="1" />
<rect x="10" y="545" width="5" height="1" fill="#9a9a9a" stroke="none" stroke-width="1" />
<rect x="11" y="554" width="2" height="1" fill="#8a8a8a" stroke="none" stroke-width="1" />
<g transform="translate(15 564.96) rotate(-90)"><text x="-2.75" y="0" font-size="10" fill="#333" textLength="5.5" lengthAdjust="spacingAndGlyphs">8</text></g>
<rect x="11" y="573" width="2" height="1" fill="#8a8a8a" stroke="none" stroke-width="1" />
<rect x="10" y="583" width="5" height="1" fill="#9a9a9a" stroke="none" stroke-width="1" />
<rect x="11" y="592" width="2" height="1" fill="#8a8a8a" stroke="none" stroke-width="1" />
<g transform="translate(15 602.75) rotate(-90)"><text x="-2.75" y="0" font-size="10" fill="#333" textLength="5.5" lengthAdjust="spacingAndGlyphs">9</text></g>
<rect x="11" y="611" width="2" height="1" fill="#8a8a8a" stroke="none" stroke-width="1" />
<rect x="10" y="620" width="5" height="1" fill="#9a9a9a" stroke="none" stroke-width="1" />
<rect x="11" y="630" width="2" height="1" fill="#8a8a8a" stroke="none" stroke-width="1" />
<g transform="translate(15 640.55) rotate(-90)"><text x="-5.25" y="0" font-size="10" fill="#333" textLength="10.5" lengthAdjust="spacingAndGlyphs">10</text></g>
<rect x="11" y="649" width="2" height="1" fill="#8a8a8a" stroke="none" stroke-width="1" />
<rect x="10" y="658" width="5" height="1" fill="#9a9a9a" stroke="none" stroke-width="1" />
<rect x="11" y="668" width="2" height="1" fill="#8a8a8a" stroke="none" stroke-width="1" />
<g transform="translate(15 678.35) rotate(-90)"><text x="-5.25" y="0" font-size="10" fill="#333" textLength="10.5" lengthAdjust="spacingAndGlyphs">11</text></g>
<rect x="11" y="686" width="2" height="1" fill="#8a8a8a" stroke="none" stroke-width="1" />
<rect x="10" y="696" width="5" height="1" fill="#9a9a9a" stroke="none" stroke-width="1" />
<rect x="11" y="705" width="2" height="1" fill="#8a8a8a" stroke="none" stroke-width="1" />
<g transform="translate(15 716.14) rotate(-90)"><text x="-5.25" y="0" font-size="10" fill="#333" textLength="10.5" lengthAdjust="spacingAndGlyphs">12</text></g>
<rect x="11" y="724" width="2" height="1" fill="#8a8a8a" stroke="none" stroke-width="1" />
<rect x="10" y="734" width="5" height="1" fill="#9a9a9a" stroke="none" stroke-width="1" />
<rect x="11" y="743" width="2" height="1" fill="#8a8a8a" stroke="none" stroke-width="1" />
<g transform="translate(15 753.93) rotate(-90)"><text x="-5.25" y="0" font-size="10" fill="#333" textLength="10.5" lengthAdjust="spacingAndGlyphs">13</text></g>
<rect x="11" y="762" width="2" height="1" fill="#8a8a8a" stroke="none" stroke-width="1" />
<rect x="10" y="772" width="5" height="1" fill="#9a9a9a" stroke="none" stroke-width="1" />
<rect x="11" y="781" width="2" height="1" fill="#8a8a8a" stroke="none" stroke-width="1" />
<g transform="translate(15 791.73) rotate(-90)"><text x="-5.25" y="0" font-size="10" fill="#333" textLength="10.5" lengthAdjust="spacingAndGlyphs">14</text></g>
<rect x="11" y="800" width="2" height="1" fill="#8a8a8a" stroke="none" stroke-width="1" />
<rect x="10" y="809" width="5" height="1" fill="#9a9a9a" stroke="none" stroke-width="1" />
<rect x="11" y="819" width="2" height="1" fill="#8a8a8a" stroke="none" stroke-width="1" />
<g transform="translate(15 829.53) rotate(-90)"><text x="-5.25" y="0" font-size="10" fill="#333" textLength="10.5" lengthAdjust="spacingAndGlyphs">15</text></g>
<rect x="407.5" y="168.5" width="792" height="700" fill="#ffffff" stroke="#c6c6c6"/>
<path d="M520.5 335.60 C690.5 264.23 860.5 407.37 1030.5 336.00 L1030.5 567.50 C860.5 638.83 690.5 495.67 520.5 567.00 Z" fill="#ffffff" stroke="#1a1a1a" stroke-width="1.1"/>
<path d="M520.5 451.50 C690.5 380.13 860.5 523.27 1030.5 451.90 L1030.5 578.50 C860.5 649.83 690.5 506.67 520.5 578.00 Z" fill="#548235" stroke="#1a1a1a" stroke-width="1.1"/>
<path d="M520.5 555.20 C690.5 484.07 860.5 627.43 1030.5 556.30 L1030.5 692.00 C860.5 763.20 690.5 619.90 520.5 691.10 Z" fill="#ffc000" stroke="#1a1a1a" stroke-width="1.1"/>
<rect x="1584" y="145" width="15" height="692" fill="#ebebeb" stroke="none" stroke-width="1" />
<rect x="1584.5" y="145.5" width="14" height="14" fill="#fff" stroke="#ababab"/><path d="M1588 154 L1591.5 150 L1595 154 Z" fill="#606060"/>
<rect x="1584.5" y="493.5" width="14" height="192" fill="#fff" stroke="#ababab"/>
<rect x="1584.5" y="821.5" width="14" height="14" fill="#fff" stroke="#ababab"/><path d="M1588 827 L1595 827 L1591.5 831 Z" fill="#606060"/>
<rect x="0" y="837" width="1600" height="1" fill="#ffffff" stroke="none" stroke-width="1" />
<rect x="0" y="838" width="1600" height="22" fill="#2b579a" stroke="none" stroke-width="1" />
<text x="7.40" y="853.00" font-size="11" fill="#fff" font-weight="normal" textLength="72.60" lengthAdjust="spacingAndGlyphs" >PÁGINA 2 DE 2</text>
<text x="99.00" y="853.00" font-size="11" fill="#fff" font-weight="normal" textLength="58.80" lengthAdjust="spacingAndGlyphs" >0 PALABRAS</text>
<path d="M186 844 V842.5 H191 V844.5 M191 850.5 V852.5 H186 L184.5 854.5 L183 852.5 H178.5 V842.5 H183 L184.5 844 L186 842.5 M184.5 844 V854" fill="none" stroke="#fff" stroke-width="1.1"/><path d="M187.5 845.8 L191.8 850.2 M191.8 845.8 L187.5 850.2" stroke="#fff" stroke-width="1.5"/>
<text x="209.40" y="853.00" font-size="11" fill="#fff" font-weight="normal" textLength="106.20" lengthAdjust="spacingAndGlyphs" >ESPAÑOL (ECUADOR)</text>
<rect x="1343.5" y="838" width="37.5" height="22" fill="#1f4d8d" stroke="none" stroke-width="1" />
<path d="M1317.5 842.5 H1329.5 V854.5 H1324.5 L1323.5 855.5 L1322.5 854.5 H1317.5 Z M1323.5 843 V855" fill="none" stroke="#fff" stroke-width="1.1"/><path d="M1319 844.5 H1328 M1319 846.5 H1328 M1319 848.5 H1328 M1319 850.5 H1328 M1319 852.5 H1328" stroke="#fff" stroke-width="1"/>
<rect x="1355.5" y="842.5" width="13" height="12" fill="none" stroke="#fff" stroke-width="1.2"/><path d="M1357.5 844.5 H1366.5 M1357.5 846.5 H1366.5 M1357.5 848.5 H1366.5 M1357.5 850.5 H1366.5 M1357.5 852.5 H1366.5" stroke="#fff"/>
<path d="M1398 853.5 H1393.5 V842.5 H1404.5 V847" fill="none" stroke="#fff" stroke-width="1.1"/><path d="M1395.5 844.5 H1402.5 M1395.5 846.5 H1401 M1395.5 848.5 H1399 M1395.5 850.5 H1398" stroke="#fff"/><circle cx="1402.5" cy="851.5" r="4.3" fill="#e8ecf5"/><path d="M1400 849.5 L1402 851.5 L1400.5 854 M1403.5 848 L1405.5 850" fill="none" stroke="#2b579a" stroke-width="1.2"/>
<rect x="1424" y="848" width="6" height="2" fill="#fff" stroke="none" stroke-width="1" />
<rect x="1434" y="848" width="100" height="1" fill="#fff" stroke="none" stroke-width="1" />
<rect x="1481.5" y="843" width="5" height="11" fill="#fff" stroke="none" stroke-width="1" />
<rect x="1538" y="848" width="8" height="2" fill="#fff" stroke="none" stroke-width="1" />
<rect x="1541" y="844.5" width="2" height="9" fill="#fff" stroke="none" stroke-width="1" />
<text x="1561.60" y="853.50" font-size="11" fill="#fff" font-weight="normal" textLength="29.40" lengthAdjust="spacingAndGlyphs" >100 %</text>
<rect x="0" y="860" width="1600" height="40" fill="url(#tbbg)" stroke="none" stroke-width="1" />
<ellipse cx="1425" cy="888" rx="70" ry="30" fill="url(#tbwarm)"/>
<path d="M16 873.5 L23.2 872.5 V879.5 H16 Z M24.2 872.3 L32.3 871.2 V879.5 H24.2 Z M16 880.5 H23.2 V887.5 L16 886.5 Z M24.2 880.5 H32.3 V888.6 L24.2 887.6 Z" fill="#fff"/>
<rect x="48" y="860" width="288" height="39" fill="#f0f0f0" stroke="none" stroke-width="1" />
<circle cx="71" cy="877" r="5.5" fill="none" stroke="#222" stroke-width="1.2"/><path d="M67 881 L60.5 887.5" stroke="#222" stroke-width="1.4"/>
<text x="88.75" y="885.50" font-size="15" fill="#222" font-weight="normal" textLength="41.85" lengthAdjust="spacingAndGlyphs" >Buscar</text>
<defs><linearGradient id="rock" x1="0" y1="0" x2="0.3" y2="1"><stop offset="0" stop-color="#d8d2ea"/><stop offset="0.5" stop-color="#8c88b8"/><stop offset="1" stop-color="#3e3e78"/></linearGradient><linearGradient id="ground" x1="0" y1="0" x2="1" y2="0"><stop offset="0" stop-color="#7f8cdc"/><stop offset="0.5" stop-color="#6b7ad2"/><stop offset="1" stop-color="#95a0e6"/></linearGradient></defs><path d="M258 899 Q262 889 274 883.5 Q288 878.5 304 880 L336 883 V899 Z" fill="url(#ground)"/><path d="M263 889.5 L269.5 882.5 L279 880.5 L287 877.5 L292 878.5 L297.5 879.5 L298 881 Q285 881 275 884.5 Q268 887 263 889.5 Z" fill="#4a3a98"/><path d="M297 884 Q296 873 305 869 Q319 866 329.5 871.5 Q335 876 333.5 883.5 Q331 891 316 891 Q300 891.5 297 884 Z" fill="url(#rock)"/><path d="M301.5 880.5 Q309 874.5 321 876 Q327 877.5 323 879.5 Q313 881.5 301.5 880.5 Z" fill="#eeeaf8"/><path d="M305 870 Q309 868 313 869 L309 875 Z" fill="#e6e2f2"/><ellipse cx="272" cy="895.5" rx="8" ry="3.5" fill="#4e4e88"/><ellipse cx="285" cy="890.5" rx="4.5" ry="2" fill="#5a5a95"/><ellipse cx="292" cy="887.8" rx="2.5" ry="1.2" fill="#6a6aa0"/>
<rect x="48" y="899" width="210" height="1" fill="#9a9a9a" stroke="none" stroke-width="1" />
<path d="M352.5 873.5 H361.5 M352.5 886.5 H361.5" stroke="#fff" stroke-width="1.2"/><rect x="353.5" y="876.5" width="7" height="7" fill="none" stroke="#fff" stroke-width="1.2"/><path d="M366.5 872 V875 M366.5 880 V887" stroke="#fff" stroke-width="1.2"/><rect x="365.5" y="876" width="2.5" height="2.5" fill="#fff"/>
<defs><linearGradient id="edge1" x1="0" y1="0" x2="0.6" y2="1"><stop offset="0" stop-color="#2aa3f0"/><stop offset="1" stop-color="#1a5cc0"/></linearGradient><linearGradient id="edge2" x1="0" y1="0" x2="1" y2="0.6"><stop offset="0" stop-color="#33c4e8"/><stop offset="0.5" stop-color="#2fcfb8"/><stop offset="1" stop-color="#6ee064"/></linearGradient></defs><circle cx="411" cy="880" r="12" fill="url(#edge1)"/><path d="M414 885 Q420 886 423 881 L422.5 885 Q419 890 413 889.5 Z" fill="#2a4a7a"/><path d="M399 879 A12 12 0 0 1 423 879.5 Q422.5 885 417 885 Q411.5 885 409.5 880.5 Q409 876.5 413 876 Q408 873.5 404 875 Q400.5 876.5 399 879 Z" fill="url(#edge2)"/><ellipse cx="412" cy="880.5" rx="2.8" ry="3" fill="#2b3f5a"/>
<path d="M449 872 H457 L459 874 H470.5 V888.5 H449 Z" fill="#f4c84c"/><rect x="449" y="875" width="21.5" height="13.5" fill="#ffd96a"/><path d="M454.5 888.5 V882.5 H464.5 V888.5" fill="none" stroke="#3a8fd9" stroke-width="2.4"/>
<rect x="497" y="872.5" width="23" height="19.5" rx="3" fill="#f8f8f8"/><path d="M502.5 873 V869.5 H514.5 V873" fill="none" stroke="#3da2db" stroke-width="1.6"/><rect x="504" y="878" width="4" height="4" fill="#f25022"/><rect x="509" y="878" width="4" height="4" fill="#7fba00"/><rect x="504" y="883" width="4" height="4" fill="#00a4ef"/><rect x="509" y="883" width="4" height="4" fill="#ffb900"/>
<path d="M545.5 875 L558 868.5 L570.5 875 V891.5 H545.5 Z" fill="#1a6fc4"/><path d="M548 875 H568 L558 882 Z" fill="#f0f0f0"/><path d="M545.5 876 L558 884 L570.5 876 V891.5 H545.5 Z" fill="#39a9ea"/><path d="M545.5 891.5 L558 883 L570.5 891.5 Z" fill="#2d8fdc"/>
<circle cx="607" cy="880" r="12" fill="#2e9f4a"/><path d="M595.46 876.69 A12 12 0 0 1 617.50 874.18 L611.68 877.30 L602.32 877.30 Z" fill="#e0362b"/><path d="M617.50 874.18 A12 12 0 0 1 607.63 891.98 L607.00 885.40 L611.68 877.30 Z" fill="#f9c22e"/><path d="M607.63 891.98 A12 12 0 0 1 595.46 876.69 L602.32 877.30 L607.00 885.40 Z" fill="#2e9f4a"/><circle cx="607" cy="880" r="5.6" fill="#fff"/><circle cx="607" cy="880" r="4.4" fill="#3f7ff0"/>
<rect x="587" y="898" width="40" height="2" fill="#f4b0d6" stroke="none" stroke-width="1" />
<rect x="632" y="860" width="48" height="38" fill="#5e615d" stroke="none" stroke-width="1" />
<rect x="632" y="898" width="48" height="2" fill="#f4b0d6" stroke="none" stroke-width="1" />
<rect x="653" y="872.5" width="13" height="16" fill="#fff" stroke="#2b579a"/><path d="M656 875.5 H664 M656 877.5 H664 M656 879.5 H664 M656 881.5 H664 M656 883.5 H664 M656 885.5 H664" stroke="#4a6fa5" stroke-width="0.9"/><path d="M644.5 871 L657 868.5 V891 L644.5 888.5 Z" fill="#2b579a"/><text x="645.5" y="884" font-size="10" font-weight="bold" fill="#fff" textLength="9" lengthAdjust="spacingAndGlyphs">W</text>
<circle cx="705" cy="880" r="12" fill="#000"/><g fill="none" stroke-width="2.1"><path d="M706 872 V883 A3.4 3.4 0 1 1 702.6 879.6 M706 872.5 Q706.8 876.2 710.5 876.8" stroke="#25f4ee" transform="translate(-0.9 -0.7)"/><path d="M706 872 V883 A3.4 3.4 0 1 1 702.6 879.6 M706 872.5 Q706.8 876.2 710.5 876.8" stroke="#fe2c55" transform="translate(0.9 0.7)"/><path d="M706 872 V883 A3.4 3.4 0 1 1 702.6 879.6 M706 872.5 Q706.8 876.2 710.5 876.8" stroke="#fff"/></g>
<defs><linearGradient id="ph" x1="0" y1="1" x2="1" y2="0"><stop offset="0" stop-color="#1e90e8"/><stop offset="1" stop-color="#6d5fd0"/></linearGradient></defs><rect x="743" y="869" width="22" height="22.5" rx="2.5" fill="url(#ph)"/><path d="M743 888 L752 878 L765 891.5 H745.5 Q743 891.5 743 889 Z" fill="#38b4f0"/><path d="M749 891.5 L758 884 L765 889 V891.5 Z" fill="#2a8ad8"/><circle cx="759" cy="873.5" r="2" fill="#f0f0ff"/>
<rect x="734" y="898" width="40" height="2" fill="#f4b0d6" stroke="none" stroke-width="1" />
<path d="M1357.5 883 L1363.3 877 L1369 883" fill="none" stroke="#fff" stroke-width="1.2"/>
<rect x="1382" y="876.5" width="7" height="7.5" rx="1" fill="none" stroke="#fff" stroke-width="1.1"/><path d="M1389 878.5 L1392.5 876.5 V884 L1389 882" fill="none" stroke="#fff" stroke-width="1.1"/><path d="M1383 873 Q1386 871.5 1389 873 M1383 887.5 Q1386 889 1389 887.5" fill="none" stroke="#fff" stroke-width="1"/>
<path d="M1406.5 887 A11 11 0 0 1 1417.5 876 M1409.5 887 A8 8 0 0 1 1417.5 879 M1412.5 887 A5 5 0 0 1 1417.5 882" fill="none" stroke="#fff" stroke-width="1.1"/><circle cx="1416.5" cy="886" r="1.3" fill="#fff"/>
<path d="M1427.5 877.5 H1430.5 L1434.5 873.5 V887 L1430.5 883 H1427.5 Z" fill="none" stroke="#fff" stroke-width="1.1"/><path d="M1437 877 Q1439 880 1437 883 M1439.5 875 Q1442.5 880 1439.5 885 M1442 873 Q1446 880 1442 887" fill="none" stroke="#ccc" stroke-width="1"/>
<text x="1455.40" y="883.70" font-size="12.5" fill="#fff" font-weight="normal" textLength="17.85" lengthAdjust="spacingAndGlyphs" >ESP</text>
<text x="1501.70" y="874.60" font-size="12.5" fill="#fff" font-weight="normal" textLength="26.00" lengthAdjust="spacingAndGlyphs" >10:52</text>
<text x="1492.00" y="892.40" font-size="12.5" fill="#fff" font-weight="normal" textLength="46.00" lengthAdjust="spacingAndGlyphs" >6/2/2024</text>
<path d="M1558.5 872 H1576.5 V886 H1566 L1562 890 V886 H1558.5 Z" fill="#fff"/><path d="M1561 875.5 H1574 M1561 878.5 H1574 M1561 881.5 H1570" stroke="#3b3d3b" stroke-width="1"/><circle cx="1574" cy="886.5" r="8" fill="#3b3d3b" stroke="#888" stroke-width="1"/>
<text x="1570.50" y="891.00" font-size="12" fill="#fff" font-weight="normal" textLength="7.00" lengthAdjust="spacingAndGlyphs" >6</text>
<line x1="1595.5" y1="860" x2="1595.5" y2="900" stroke="#7a7a7a" stroke-width="1" />
</svg>
</body></html>
